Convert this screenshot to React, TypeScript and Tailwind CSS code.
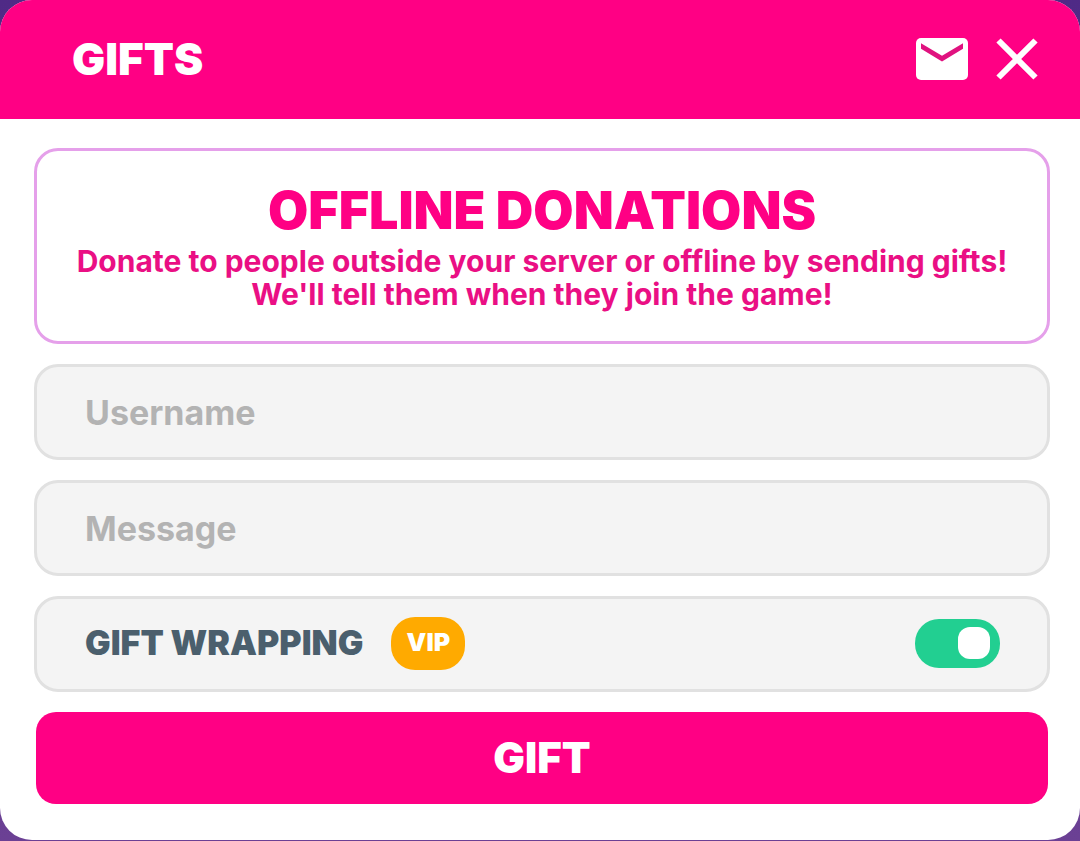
import { useState } from "react";

function MailIcon() {
  return (
    <svg viewBox="0 0 52 42" className="h-[42px] w-[52px]" aria-hidden="true">
      <rect width="52" height="42" rx="5" fill="#fff" />
      <path d="M5 5.2v5.6l21 12.8 21-12.8V5.2L26 17.8z" fill="#e0127f" />
    </svg>
  );
}

function CloseIcon() {
  return (
    <svg viewBox="0 0 42 42" className="size-[42px]" aria-hidden="true">
      <path d="M2.5 2.5l37 37M39.500 2.5L2.5 39.5" stroke="#fff" strokeWidth="6" />
    </svg>
  );
}

const field =
  "block h-24 w-full rounded-3xl border-[3px] border-[#e1e1e1] bg-[#f4f4f4] px-12 text-[34px] font-bold text-[#4b5f6d] outline-none placeholder:text-[#b3b3b3] placeholder:opacity-100";

export default function App() {
  const [wrapped, setWrapped] = useState(true);

  return (
    <div className="flex min-h-screen flex-col bg-linear-to-b from-[#4f2a86] to-[#6b4094] pb-px font-['Inter','Open_Sans',sans-serif]">
      <main className="flex grow flex-col overflow-hidden rounded-[32px] bg-white">
        <header className="flex h-[119px] items-center justify-between bg-[#ff0084] pr-[42px] pb-0.5 pl-[72px] text-white">
          <h1 className="text-[44px] leading-none font-black">GIFTS</h1>
          <div className="flex items-center gap-7">
            <button type="button" aria-label="Inbox">
              <MailIcon />
            </button>
            <button type="button" aria-label="Close">
              <CloseIcon />
            </button>
          </div>
        </header>

        <form
          className="flex flex-col gap-5 pt-[29px] pr-[30px] pb-9 pl-[34px]"
          onSubmit={(e) => e.preventDefault()}
        >
          <section className="flex h-[196px] flex-col items-center justify-center rounded-3xl border-[3px] border-[#e5a0ea] text-center text-[#ff0084]">
            <h2 className="pb-1 text-[52px] leading-[60px] font-black">OFFLINE DONATIONS</h2>
            <p className="text-[30px] leading-[33px] font-bold text-[#ea0f84]">
              Donate to people outside your server or offline by sending gifts!
              <br />
              We'll tell them when they join the game!
            </p>
          </section>

          <input type="text" aria-label="Username" placeholder="Username" className={field} />
          <input type="text" aria-label="Message" placeholder="Message" className={field} />

          <div className="flex h-24 items-center justify-between rounded-3xl border-[3px] border-[#e1e1e1] bg-[#f4f4f4] pr-[47px] pb-0.5 pl-12">
            <div className="flex items-center gap-7">
              <label htmlFor="wrapping" className="text-[34px] leading-10 font-black text-[#4b5f6d]">
                GIFT WRAPPING
              </label>
              <span className="flex h-[53px] w-[74px] items-center justify-center rounded-3xl bg-[#ffaa00] text-[25px] font-black text-white">
                VIP
              </span>
            </div>
            <input
              id="wrapping"
              type="checkbox"
              role="switch"
              checked={wrapped}
              onChange={(e) => setWrapped(e.target.checked)}
              className="flex h-[49px] w-[85px] cursor-pointer appearance-none items-center rounded-3xl bg-[#b3b3b3] px-2.5 before:size-8 before:rounded-xl before:bg-white checked:justify-end checked:bg-[#22cf91]"
            />
          </div>

          <button
            type="submit"
            className="mx-0.5 h-[92px] rounded-[20px] bg-[#ff0084] text-[42px] leading-none font-black text-white"
          >
            GIFT
          </button>
        </form>
      </main>
    </div>
  );
}
